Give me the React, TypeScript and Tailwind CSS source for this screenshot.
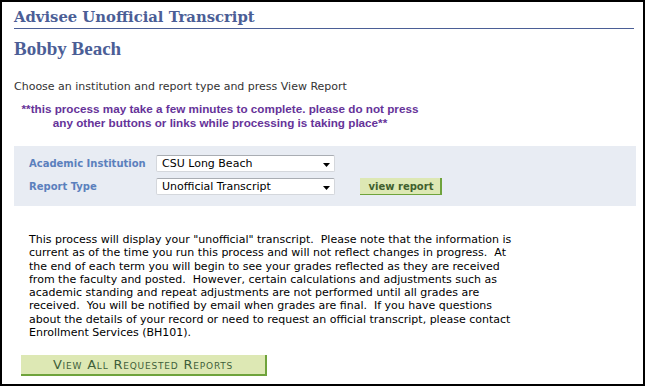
import React from "react";

function Select({ value }: { value: string }) {
  return (
    <div className="relative shrink-0 w-[179px] h-[17px] bg-white border border-[#d4d7dc] border-t-[#a9adb3] rounded-[2px] flex items-center pl-[5px] text-[11px] text-black font-['DejaVu_Sans',sans-serif] leading-none">
      <span>{value}</span>
      <svg className="absolute right-[4px] top-[7px]" width="7" height="4" viewBox="0 0 7 4">
        <polygon points="0,0 7,0 3.5,4" fill="#000" />
      </svg>
    </div>
  );
}

export default function App() {
  return (
    <div className="w-[645px] h-[386px] border-2 border-black bg-white box-border overflow-hidden">
      <div className="pl-[12px] pr-[7px]">
        <div className="mr-[2px] pt-[6px] pb-[2px] border-b border-[#4b5e96] text-[14.8px] leading-[18px] font-bold text-[#4b5e96] font-['DejaVu_Serif',serif]">
          Advisee Unofficial Transcript
        </div>
        <div className="mt-[9px] text-[19px] leading-[22px] font-bold text-[#4b5e96] font-['Liberation_Serif',serif]">
          Bobby Beach
        </div>
        <div className="mt-[20px] text-[11px] leading-[14px] text-[#333333] font-['DejaVu_Sans',sans-serif]">
          Choose an institution and report type and press View Report
        </div>
        <div className="mt-[8px] w-[412px] text-center text-[11.7px] leading-[14px] font-bold text-[#663399] font-['Liberation_Sans',sans-serif]">
          **this process may take a few minutes to complete. please do not press
          <br />
          any other buttons or links while processing is taking place**
        </div>
        <div className="mt-[16px] h-[60px] bg-[#e8ecf3] pl-[15px] pt-[9px] flex flex-col gap-[6px]">
          <div className="flex items-center">
            <div className="w-[127px] shrink-0 whitespace-nowrap text-[10px] font-bold text-[#5b80bd] font-['DejaVu_Sans',sans-serif]">
              Academic Institution
            </div>
            <Select value="CSU Long Beach" />
          </div>
          <div className="flex items-center">
            <div className="w-[127px] shrink-0 whitespace-nowrap text-[10px] font-bold text-[#5b80bd] font-['DejaVu_Sans',sans-serif]">
              Report Type
            </div>
            <Select value="Unofficial Transcript" />
            <div className="ml-[25px] shrink-0 w-[82px] h-[17px] bg-[#dde8b4] border-r-2 border-b border-[#6fa33c] flex items-center justify-center pl-[2px] text-[10px] font-bold text-[#3f5f2e] font-['DejaVu_Sans',sans-serif]">
              view report
            </div>
          </div>
        </div>
        <div className="mt-[27px] pl-[15px] whitespace-pre text-[11px] leading-[13.3px] text-black font-['DejaVu_Sans',sans-serif]">
          {`This process will display your "unofficial" transcript.  Please note that the information is
current as of the time you run this process and will not reflect changes in progress.  At
the end of each term you will begin to see your grades reflected as they are received
from the faculty and posted.  However, certain calculations and adjustments such as
academic standing and repeat adjustments are not performed until all grades are
received.  You will be notified by email when grades are final.  If you have questions
about the details of your record or need to request an official transcript, please contact
Enrollment Services (BH101).`}
        </div>
        <div className="mt-[16px] ml-[7px] w-[246px] h-[21px] bg-[#dde8b4] border-r-2 border-b-2 border-[#6fa33c] flex items-center justify-center text-[13px] tracking-[0.8px] [font-variant:small-caps] text-[#3f5f3a] font-['DejaVu_Sans',sans-serif]">
          View All Requested Reports
        </div>
      </div>
    </div>
  );
}
